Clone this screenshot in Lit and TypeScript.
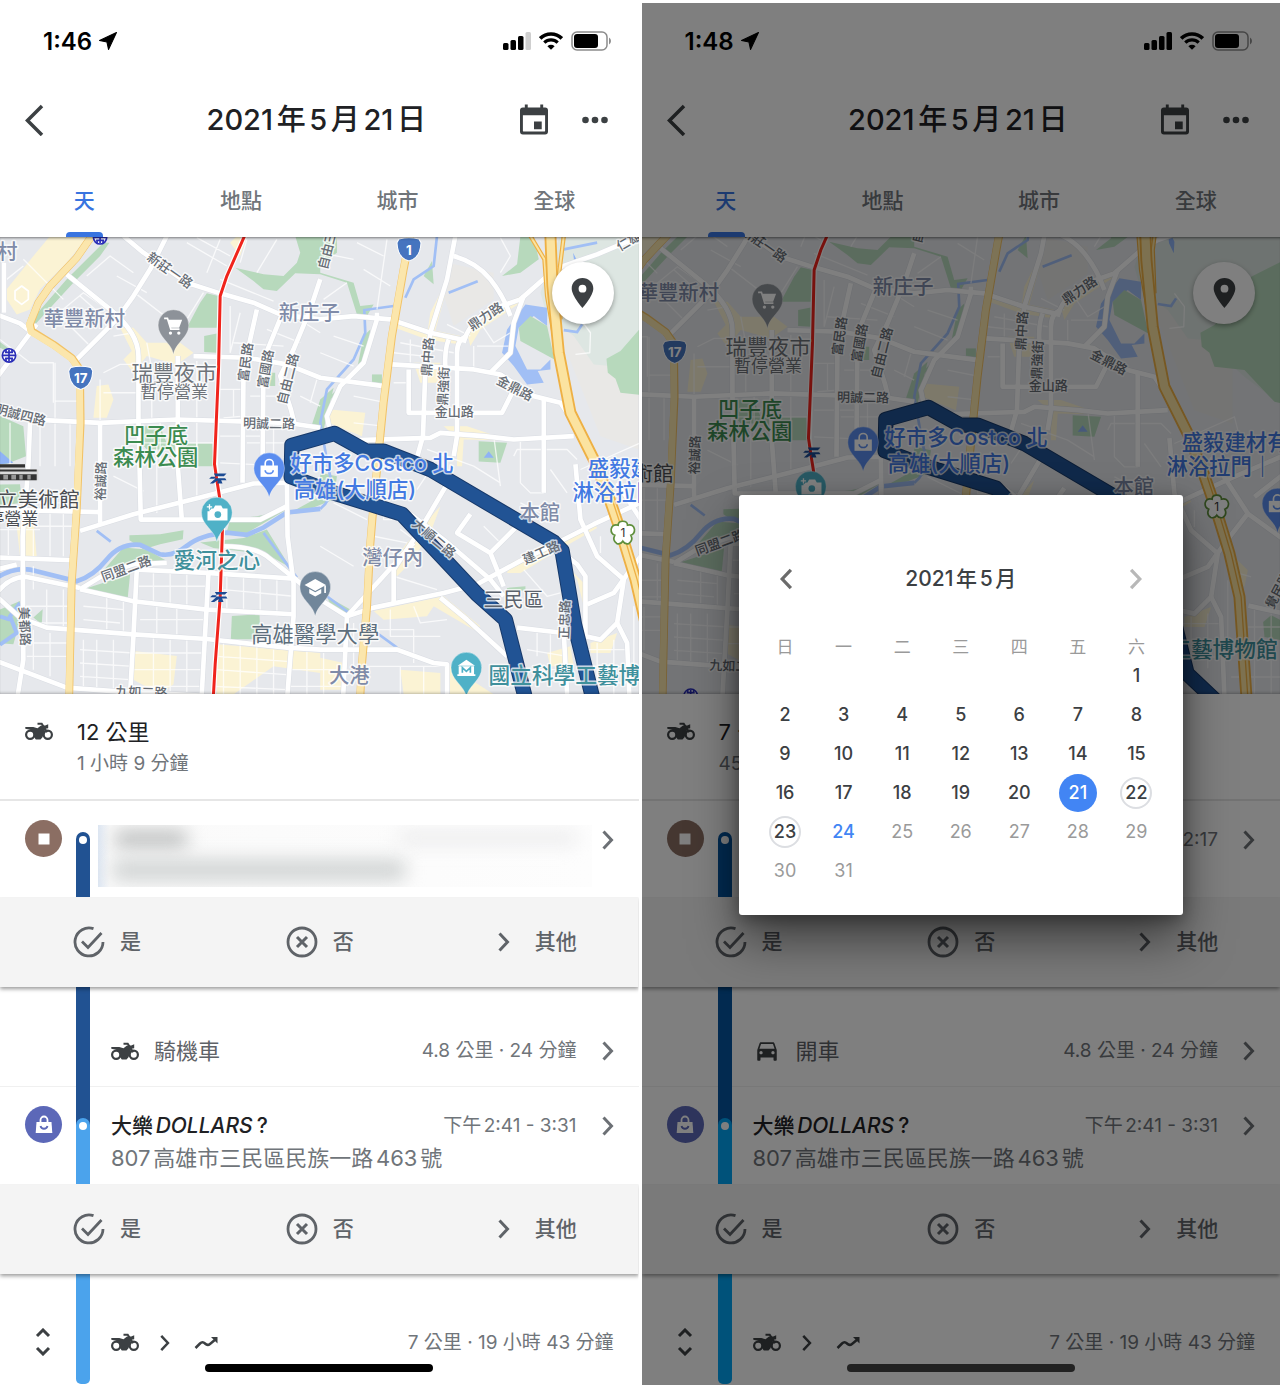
import { LitElement, html, svg, css, nothing } from "lit";
import { customElement, property, state } from "lit/decorators.js";
import { classMap } from "lit/directives/class-map.js";

/* ---------- icons ---------- */

const shared = css`
  * {
    box-sizing: border-box;
  }
  svg {
    display: block;
    flex: none;
  }
  button {
    margin: 0;
    padding: 0;
    border: 0;
    background: none;
    font: inherit;
    color: inherit;
    cursor: pointer;
  }
`;

const chevron = (size = 24, width = 3) => html`
  <svg width=${size} height=${size} viewBox="0 0 24 24" fill="none" stroke="currentColor" stroke-width=${width} aria-hidden="true">
    <path d="M7.500 3.500L15.500 12 7.500 20.500" />
  </svg>
`;

const chevronLeft = (size = 24, width = 3) => html`
  <svg width=${size} height=${size} viewBox="0 0 24 24" fill="none" stroke="currentColor" stroke-width=${width} aria-hidden="true">
    <path d="M16.500 3.500L8.500 12 16.500 20.500" />
  </svg>
`;

const motorcycle = html`
  <svg width="28" height="19" viewBox="0 0 28 19" aria-hidden="true">
    <g fill="none" stroke="currentColor" stroke-width="2.200">
      <circle cx="5.200" cy="12.800" r="4.100" />
      <circle cx="22.800" cy="12.800" r="4.100" />
      <path d="M12.500 1.800h4.200l5.500 8.500" stroke-width="2" />
    </g>
    <path fill="currentColor" d="M.3 5h8l4.200 1.200 3.500-2.800h4.200l3-1.200v4l-2.700.6-3 8.500-2 2.200h-4.700l-1.800-2.400c.8-3.200-.8-6.500-4-7.300L.3 6.800z" />
  </svg>
`;

const car = html`
  <svg width="28" height="26" viewBox="0 0 24 24" aria-hidden="true">
    <path fill="currentColor" d="M18.920 5.010C18.720 4.420 18.160 4 17.500 4h-11c-.66 0-1.210.42-1.420 1.010L3 11v9c0 .55.45 1 1 1h1c.55 0 1-.45 1-1v-2h12v2c0 .55.45 1 1 1h1c.55 0 1-.45 1-1v-9l-2.080-5.990zM6.500 15c-.83 0-1.500-.67-1.500-1.500S5.670 12 6.500 12s1.500.67 1.500 1.500S7.330 15 6.500 15zm11 0c-.83 0-1.500-.67-1.500-1.500s.67-1.500 1.500-1.500 1.500.67 1.500 1.500-.67 1.500-1.500 1.500zM5 10l1.500-4.500h11L19 10H5z" />
  </svg>
`;

const checkCircle = html`
  <svg width="32" height="32" viewBox="0 0 32 32" fill="none" stroke="currentColor" stroke-width="2.800" aria-hidden="true">
    <path d="M20.500 2.700A14 14 0 1 0 30 16" />
    <path d="M9 15.500l6 6L28.500 7" />
  </svg>
`;

const crossCircle = html`
  <svg width="32" height="32" viewBox="0 0 32 32" fill="none" stroke="currentColor" stroke-width="2.800" aria-hidden="true">
    <circle cx="16" cy="16" r="14" />
    <path d="M11 11l10 10M21 11L11 21" stroke-width="3" />
  </svg>
`;

const bag = html`
  <svg width="20" height="20" viewBox="0 0 20 20" fill="none" aria-hidden="true">
    <path d="M2.500 7h15l.8 11H1.700z" fill="#fff" />
    <path d="M6.500 7.500V5a3.500 3.500 0 0 1 7 0v2.500" stroke="#fff" stroke-width="1.800" />
    <path d="M6.500 11a3.600 3.600 0 0 0 7 0" stroke="#5c68b8" stroke-width="1.800" />
  </svg>
`;

const stop = html`
  <svg width="12" height="12" viewBox="0 0 12 12" aria-hidden="true"><path fill="#fff" d="M.5.5h11v11H.5z" /></svg>
`;

/* ---------- map ---------- */

interface MapLabel {
  text: string;
  x: number;
  y: number;
  kind: string;
  turn?: number;
}

const avenues: string[] = [
  "M370 0L430 50 560 140 660 172 760 200 840 235 960 250 1060 240 1170 250 1290 290 1390 312",
  "M500 0L450 100 400 180 350 250 230 370",
  "M200 115L330 220Q415 290 415 360V550L422 850H780L860 810",
  "M130 552L300 560 530 550 860 560 960 575",
  "M-10 425L110 265",
  "M-10 235L60 262 90 285",
  "M12 80V230",
  "M90 560L85 690 68 900 70 1270 40 1460",
  "M770 220L730 400 727 740",
  "M860 200L790 370 787 700",
  "M960 130L930 220 880 340 840 420 872 520 882 560",
  "M240 884L400 834 600 784 760 742 860 740",
  "M240 1059L400 1095 620 1120 880 1134",
  "M240 1059L320 1010 400 984 500 980",
  "M-10 964L220 972",
  "M410 1000L620 1010 880 1027",
  "M410 1000L400 1200 385 1460",
  "M625 1010L600 1460",
  "M-10 1080L60 1144 140 1174 400 1194 620 1208 860 1234 960 1240 1190 1240 1300 1280 1340 1284V1460",
  "M860 744L862 900 880 1040 880 1140 855 1460",
  "M665 930Q760 930 800 960L880 1024 960 1090 1040 1140 1025 1460",
  "M-10 1274L200 1354 350 1365 600 1378",
  "M-10 1070Q30 1020 80 1022L240 1055",
  "M-10 1000L50 985",
  "M580 360L740 365 860 385 960 425 1150 450",
  "M1365 0L1340 130 1290 290 1275 400 1268 600 1250 664",
  "M1360 60Q1430 80 1470 130T1530 240",
  "M1390 320Q1400 270 1460 225L1560 190 1640 120 1690 90 1790 55 1920 0",
  "M1570 180L1540 260 1530 350 1470 410",
  "M1400 300Q1370 310 1370 350V600L1360 660",
  "M1345 310Q1332 340 1335 400",
  "M1175 385L1420 400 1500 415 1600 480 1680 500 1720 560 1750 630",
  "M1225 400V530H1505L1540 460",
  "M1070 612L1290 605 1320 590 1450 600 1540 610 1720 600",
  "M1630 490L1630 770",
  "M1340 744L1260 880 1180 1000 1180 1100",
  "M1410 834L1370 890 1470 950 1510 1050",
  "M1470 950L1550 870",
  "M2070 735L1910 804 1780 864 1650 930 1560 974 1430 1044 1330 1070 1120 1114 1040 1140",
  "M1230 834L1330 910 1470 1030 1510 1080",
  "M1240 920L1040 1140",
  "M1320 1084L1400 1150 1520 1260",
  "M1550 1174L1690 1190 1700 1374",
  "M1660 930L1730 984 1755 1020V1200L1800 1210 1850 1160 1880 1220 1890 1460",
  "M1725 684L1740 850 1790 960 1870 1030 1850 1160",
  "M1760 1104L1840 1070 1890 1000 1960 910 2070 990",
  "M1850 740L1960 910",
  "M1962 1186L2070 1210M1980 860L2070 790",
  "M1130 230V250L1090 380 1020 450 980 540 990 590",
  "M533 360V690L545 850",
  "M300 560V860",
  "M0 820L60 822 300 828",
];

const lanes: string[] = [
  "M70 70L190 190M20 130L70 90M260 120L330 60 400 110M140 260L250 170 350 240M180 240L270 330M240 180L330 260",
  "M410 175L520 260M610 170L560 250M350 120L440 170M560 20L680 90M590 5L690 60M620 110L660 10M740 10L720 80M830 10L770 110",
  "M660 130L820 195M690 210L690 350M720 230L690 350M700 320L850 330M90 380H160V500M165 380V690M90 380L0 310",
  "M165 495H240M210 560V690M120 560V690M30 560V690M310 470H420M310 410L360 385H440M420 460H530M300 560V430",
  "M340 300L400 290M440 320L455 400V550M480 550V690M590 375V690M660 460H730L730 540 670 545M700 460V540",
  "M750 480H860M800 280L900 320M880 240L960 290M900 480L960 510M950 430L930 500M740 620H860M430 620H640M660 600H780",
  "M660 680L860 690M590 620V780M470 620V830M340 720L430 765M820 560V740M100 800H220M100 870H220M150 800V960M190 800V960",
  "M25 830V960M100 880V960M0 880H120M100 990V1060M140 1060V1170M190 1060V1170M70 1110H220M70 1160H220",
  "M460 1000V1110M510 1000V1110M560 1010V1110M410 1050H620M680 1020V1130M730 1020V1130M780 1030V1130M830 1030V1140M670 1060L880 1080",
  "M470 1110V1190M530 1115V1200M420 1150H620M250 1110L370 1120M250 1150L360 1160M320 1080V1180M370 1090V1190",
  "M250 1210V1360M290 1210V1360M340 1210V1360M240 1240L400 1250M240 1280L400 1290M240 1320L390 1330",
  "M100 1180V1300M150 1190V1320M80 1220H200M80 1260H210M460 1200V1374M510 1210V1374M560 1210V1374M400 1250H610M400 1300H610M390 1350H600",
  "M670 1220V1460M720 1220V1460M770 1230V1460M820 1240V1460M650 1260L860 1275M650 1300L860 1315M640 1350L860 1360M920 1240V1460M970 1250V1460M870 1300H1030M870 1350H1030",
  "M960 50L1060 70M1000 5L960 90M1070 20L1150 60M1090 100L1170 150M1160 10L1130 220M1040 140L970 190",
  "M1000 300L1090 330M960 350L1060 390M1180 350L1270 360M1230 310V380M1270 330V450M1180 440H1225V530M1200 320L1360 350",
  "M1440 260L1480 320 1530 290M1430 330H1530M1420 330V400M1310 230L1280 300M1340 265L1410 300M1060 480L1160 500M1060 560L1150 570",
  "M1540 660L1550 640 1700 640 1730 670M1480 600L1500 750M1280 640L1420 690 1500 740M1560 610V740L1590 770H1630M1650 700L1700 770",
  "M1000 800L1100 850M1150 760V850H1180M1120 900L1220 920M1160 940L1260 980M1200 880L1310 960M1180 1020L1310 1060M960 930L1060 990",
  "M1590 860L1640 900M1450 870L1500 920M1560 800L1640 840M1570 1000L1640 1080 1680 1070M1610 1190V1260M1650 1190V1300",
  "M1120 1180H1240V1280M1170 1120V1200H1320M1240 1110L1260 1160 1340 1150M1060 1160V1300M1100 1290H1330M1200 1290V1460M1270 1290V1460",
  "M1580 1240L1700 1260M1600 1300H1700M1760 1240H1880M1790 1220V1374M1840 1210V1374M1770 1290H1890M1770 1340H1890",
  "M1800 900V950M1900 1080L1970 1100M1900 1110V1300M1960 1250H2060M1980 1190V1450M2030 1200V1450M1910 1400H2060",
  "M1740 250L1770 290 1768 350 1725 355M1740 700L1920 620 1930 660M1290 700L1250 760M1500 5L1530 60 1500 110",
];

const shops: string[] = [
  "M20 160L100 60 150 0H265L200 80 120 160 90 220 50 235 20 190z",
  "M360 275H400L440 320 540 320 580 350 530 385 440 360 400 410 370 370 395 345z",
  "M290 450L325 445 340 490 320 545 280 545z",
  "M400 1244L530 1259 520 1344 480 1374 400 1330z",
  "M650 1224L960 1250V1310L820 1290 700 1374H650z",
  "M990 520L1095 530 1085 600 985 560z",
  "M50 870L100 850 110 960 60 960z",
  "M690 20L710 0H740L720 60z",
  "M1170 250L1290 280 1380 300V325L1280 310 1170 270z",
  "M1290 230L1320 170 1335 175 1300 300H1280z",
  "M1240 380H1320V440H1260z",
  "M1330 570H1400L1490 600V612L1390 610 1385 690H1370V605z",
  "M1400 290L1500 210 1560 180V200L1440 280 1410 330z",
  "M1220 920L1320 810 1290 890 1230 980 1190 1020 1160 1000z",
  "M1120 1124L1330 1080 1440 1170 1420 1180 1300 1110 1280 1140 1150 1150z",
  "M1530 980L1650 920 1780 860 1790 875 1660 950 1560 1010 1520 1010z",
  "M1340 1284L1480 1374H1340zM1200 1300L1320 1310V1374H1210z",
  "M1700 990L1750 1040V1110L1730 1030zM1770 1220L1850 1190 1830 1250H1770z",
  "M1640 1250L1710 1230 1720 1290 1650 1290z",
  "M960 1264L1030 1280V1360H960z",
  "M1900 1020L1960 1080 1950 1130 1910 1080z",
];

const parks: string[] = [
  "M885 0H1010L1010 50 960 85 960 110 1060 140 1080 210 1120 205 1100 240 1070 235 1040 140 960 115 885 112 830 165 790 160 760 135 705 95 790 115 850 120 890 80 900 50z",
  "M560 275H650L655 180 620 172 600 200z",
  "M612 300L650 292V350L612 348z",
  "M-10 535L70 570 78 660 -10 695z",
  "M-10 310L30 340V350L-10 330z",
  "M310 20H328L300 60 220 140 105 265 100 245 200 130z",
  "M935 565L960 490 1000 455 970 580z",
  "M380 570H480L500 622H636L638 690H560L520 640 440 640z",
  "M388 897L480 894 550 882 548 909 480 924 430 939 388 912z",
  "M300 1014L370 934 440 940 500 974 430 984 330 1000z",
  "M250 1059L390 1014 383 1084 340 1079z",
  "M690 850L770 840 860 820 740 890 680 886z",
  "M600 919L730 905 800 880 870 994 800 954 640 935z",
  "M695 1139L778 1134 780 1209 692 1209z",
  "M-10 1124L60 1094 58 1160 40 1224 -10 1220z",
  "M100 1144L128 1119 125 1164z",
  "M-10 745L60 744 66 800 -10 810z",
  "M1505 120L1550 85 1560 0H1600L1615 70 1560 110z",
  "M1295 75L1300 145 1270 120z",
  "M1070 400L1090 300 1110 280 1100 360 1040 430 1000 500 990 480z",
  "M1115 415H1145V445H1115z",
  "M1435 615L1520 620 1500 680 1435 676z",
  "M960 710L1010 720 1000 790 900 830 860 835 960 780z",
  "M1520 1055L1575 1050V1062L1520 1070z",
  "M980 1080L1050 1120 1040 1130 990 1105z",
  "M2006 1235L2030 1215 2060 1230V1290L2010 1280z",
  "M812 410H825V450H805z",
];

const mapLabels: MapLabel[] = [
  { text: "村", x: 22, y: 46, kind: "hood" },
  { text: "華豐新村", x: 253, y: 246, kind: "hood" },
  { text: "新庄子", x: 927, y: 230, kind: "hood" },
  { text: "大港", x: 1047, y: 1318, kind: "hood" },
  { text: "灣仔內", x: 1177, y: 964, kind: "hood" },
  { text: "本館", x: 1618, y: 828, kind: "hood" },
  { text: "三民區", x: 1539, y: 1092, kind: "district" },
  { text: "瑞豐夜市", x: 522, y: 411, kind: "poi" },
  { text: "暫停營業", x: 522, y: 468, kind: "status" },
  { text: "凹子底", x: 468, y: 598, kind: "park" },
  { text: "森林公園", x: 467, y: 662, kind: "park" },
  { text: "立美術館", x: 115, y: 790, kind: "museum" },
  { text: "停營業", x: 38, y: 847, kind: "status dark" },
  { text: "愛河之心", x: 650, y: 972, kind: "sight" },
  { text: "高雄醫學大學", x: 945, y: 1194, kind: "school" },
  { text: "國立科學工藝博物館", x: 1757, y: 1317, kind: "sight" },
  { text: "好市多Costco 北", x: 1116, y: 681, kind: "shop" },
  { text: "高雄(大順店)", x: 1064, y: 759, kind: "shop" },
  { text: "盛毅建材有", x: 1922, y: 697, kind: "shop" },
  { text: "淋浴拉門｜", x: 1876, y: 768, kind: "shop" },
  { text: "新莊一路", x: 510, y: 102, kind: "street", turn: 35 },
  { text: "明誠四路", x: 62, y: 535, kind: "street", turn: 14 },
  { text: "明誠二路", x: 807, y: 561, kind: "street", turn: 1 },
  { text: "富民路", x: 735, y: 378, kind: "street", turn: -82 },
  { text: "富國路", x: 795, y: 398, kind: "street", turn: -80 },
  { text: "自由二路", x: 862, y: 428, kind: "street", turn: -76 },
  { text: "自由三", x: 980, y: 42, kind: "street", turn: -76 },
  { text: "鼎中路", x: 1281, y: 362, kind: "street", turn: -86 },
  { text: "鼎強街", x: 1328, y: 450, kind: "street", turn: -87 },
  { text: "金山路", x: 1362, y: 525, kind: "street" },
  { text: "鼎力路", x: 1455, y: 240, kind: "street", turn: -34 },
  { text: "金鼎路", x: 1544, y: 455, kind: "street", turn: 27 },
  { text: "仁雄", x: 1884, y: 14, kind: "street", turn: -30 },
  { text: "裕誠路", x: 301, y: 734, kind: "street", turn: -88 },
  { text: "同盟二路", x: 378, y: 996, kind: "street", turn: -20 },
  { text: "美都路", x: 75, y: 1170, kind: "street", turn: 87 },
  { text: "九如二路", x: 424, y: 1366, kind: "street", turn: 2 },
  { text: "大順二路", x: 1302, y: 906, kind: "street", turn: 40 },
  { text: "建工路", x: 1622, y: 948, kind: "street", turn: -24 },
  { text: "正忠路", x: 1691, y: 1150, kind: "street", turn: -88 },
  { text: "覺民路", x: 2050, y: 1140, kind: "street", turn: -62 },
];

const pinShape = "M0 88C-6 52-46 38-46 0A46 46 0 1 1 46 0C46 38 6 52 0 88z";

const route =
  "M1590 1460L1572 1374 1515 1150 1430 1074 1205 834 1000 770 873 722 875 628 1003 592 1098 645 1150 645 1290 700 1660 918 1685 944 1722 1164 1778 1390 1863 1470";

const pin = (x: number, y: number, fill: string, glyph: unknown) => svg`
  <g transform="translate(${x} ${y})">
    <path d=${pinShape} fill=${fill} stroke="#fff" stroke-opacity=".5" stroke-width="2" />
    ${glyph}
  </g>`;

const bagGlyph = svg`
  <path d="M-26-8h52v34h-52z" fill="#fff" />
  <path d="M-12-6v-8a12 12 0 0 1 24 0v8" fill="none" stroke="#fff" stroke-width="5" />
  <path d="M-12 6a12 10 0 0 0 24 0" fill="none" stroke="#5b8def" stroke-width="5" />`;

const hsr = (x: number, y: number) => svg`
  <path transform="translate(${x} ${y})" fill="#1b4a93" d="M-14-15h38l-8 8h-22l-6 6h32l4 6H8l4 10H-4l2-9-14 9h-10l16-14h-18l6-6h14z" />`;

const metro = (x: number, y: number) => svg`
  <g transform="translate(${x} ${y})" fill="none" stroke="#2b2fb8" stroke-width="5">
    <circle r="20" fill="#fff" />
    <path d="M-12-9H12M-20 0H20M-12 9H12M0-18V18M-9-18V-9M9-18V-9M-9 9V18M9 9V18" />
  </g>`;

const shield = (x: number, y: number, label: string) => svg`
  <g transform="translate(${x} ${y})">
    <path d="M-30-31Q0-38 30-31L36-20Q34 18 12 30L0 35-12 30Q-34 18-36-20z" fill="#4574bf" stroke="#fff" stroke-width="3" />
    <text class="shield" y="1">${label}</text>
  </g>`;

@customElement("city-map")
class CityMap extends LitElement {
  @property({ type: Number }) panX = 0;
  @property({ type: Number }) panY = 3;

  static styles = css`
    :host {
      display: block;
      text-autospace: no-autospace;
    }
    .canvas {
      display: block;
      width: 100%;
      aspect-ratio: 638 / 457;
      background: #e6e8ec;
    }
    .lane,
    .avenue,
    .line {
      fill: none;
      stroke: #fff;
      stroke-linejoin: round;
    }
    .lane {
      stroke-width: 4;
      stroke-opacity: 0.75;
    }
    .avenue {
      stroke-width: 14;
    }
    .casing {
      fill: none;
      stroke: #dadde3;
      stroke-width: 17;
      stroke-linejoin: round;
    }
    text {
      font-family: Inter, "Noto Sans CJK TC", sans-serif;
      text-anchor: middle;
      dominant-baseline: central;
      paint-order: stroke;
      stroke: #fff;
      stroke-opacity: 0.75;
      stroke-width: 9;
      stroke-linejoin: round;
    }
    .hood {
      font-size: 61px;
      font-weight: 500;
      fill: #7f8ba8;
    }
    .district {
      font-size: 60px;
      fill: #5b626c;
    }
    .poi {
      font-size: 64px;
      fill: #6e7379;
    }
    .status {
      font-size: 51px;
      fill: #6e7379;
    }
    .status.dark,
    .museum {
      fill: #4a4d52;
    }
    .museum {
      font-size: 62px;
    }
    .park {
      font-size: 64px;
      font-weight: 500;
      fill: #3c8b50;
    }
    .sight {
      font-size: 65px;
      font-weight: 500;
      fill: #3f909c;
    }
    .school {
      font-size: 64px;
      fill: #5d6e7c;
    }
    .shop {
      font-size: 64px;
      font-weight: 500;
      fill: #4379e2;
    }
    .street {
      font-size: 39px;
      font-weight: 500;
      fill: #666c74;
    }
    .shield {
      font-size: 40px;
      font-weight: 700;
      fill: #fff;
      stroke: none;
    }
    .flower {
      font-size: 36px;
      fill: #333;
      stroke: none;
    }
  `;

  render() {
    return html`
      <svg class="canvas" viewBox="${this.panX} ${this.panY} 1914 1371" preserveAspectRatio="xMidYMid slice" role="img" aria-label="地圖">
        <path d="M1340 80L1480 110 1480 190 1360 270 1330 180zM1560 300L1700 350 1800 600 1914 640V400L1700 200z" fill="#e9e8e6" />
        <path d="M1678 0H2110V620L1950 500 1830 390 1780 385 1720 300 1640 240 1620 170z" fill="#dde6e2" />
        <path d="M1818 368L1860 345 1960 230 1970 200 2110 130V590L2040 575 1950 480 1860 470 1845 428 1822 410z" fill="#b7d9bc" />
        <g fill="#fbf3d4">${shops.map((d) => svg`<path d=${d} />`)}</g>
        <g fill="#b7d9bc">${parks.map((d) => svg`<path d=${d} />`)}</g>
        <path
          d="M1505 350L1520 280 1575 205 1640 215V270L1600 240 1555 275 1545 330 1580 400 1620 400 1650 370V400L1612 405 1630 440 1580 445 1540 390z"
          fill="#a1bff5"
        />
        <path d="M1555 275L1590 240 1640 270 1662 370 1560 315z" fill="#b7d9bc" />
        <path d="M1450 665L1465 645 1480 665zM1718 50L1740 95 1738 130 1724 100zM0 645L40 680 0 684z" fill="#8fb3f5" />
        <g fill="none" stroke="#a1bff5">
          <path d="M-10 1025Q50 985 110 1005L230 1035Q280 1020 320 970T420 926L480 954Q520 962 560 929T680 889L740 896 790 874 860 829 960 818" stroke-width="14" />
          <path d="M960 818Q1010 780 985 700L960 560 980 460 1060 370 1095 290 1092 222 1180 210M1215 185L1240 130 1300 90 1310 0M1345 170L1432 136M1690 40L1790 20M1690 282L1730 288 1745 265M290 884L332 916M790 890L890 1024M980 1080L1060 1140M1130 1190L1190 1234" stroke-width="8" />
          <path d="M60 1100L30 1140 50 1190 0 1225M0 1140L30 1150" stroke-width="12" />
        </g>
        ${lanes.map((d) => svg`<path class="lane" d=${d} />`)}
        ${avenues.map((d) => svg`<path class="casing" d=${d} />`)}
        ${avenues.map((d) => svg`<path class="avenue" d=${d} />`)}
        <path class="line" d="M65 150L85 165V190L65 205 45 190V165z" stroke-width="5" />

        <g fill="none" stroke-linejoin="round">
          <path d="M275 0L230 65 150 150 115 200 90 265 95 285 160 325 215 365 240 400 242 560 230 824 215 1044 206 1460" stroke="#f2c265" stroke-width="23" />
          <path d="M275 0L230 65 150 150 115 200 88 265 93 287 160 328 215 368 238 402 240 560 229 824 214 1044 205 1460" stroke="#fbe6ac" stroke-width="20" />
          <path d="M1230 0L1210 100 1175 300 1150 500 1138 620 1120 804 1110 924 1100 1114 1085 1284 1076 1460" stroke="#f2c265" stroke-width="24" />
          <path d="M1229 0L1209 100 1174 300 1149 500 1137 620 1119 804 1109 924 1099 1114 1084 1284 1075 1460" stroke="#fbe6ac" stroke-width="20" />
          <path d="M1590 0L1632 70 1640 180 1668 340M1690 0L1675 120 1680 250" stroke="#eeb044" stroke-width="13" />
          <path d="M1590 0L1632 70 1640 180 1668 340M1690 0L1675 120 1680 250" stroke="#fbe3a0" stroke-width="6" />
          <path d="M1650 0L1656 150 1675 350 1710 530 1780 670 1822 774 1862 890 1905 1030 1935 1160 1956 1460" stroke="#eeb044" stroke-width="36" />
          <path d="M1650 0L1656 150 1675 350 1710 530 1780 670 1822 774 1862 890 1905 1030 1935 1160 1956 1460" stroke="#fbe3a0" stroke-width="25" />
          <path d="M1830 774L1868 890 1910 1030 1940 1160 1960 1460" stroke="#eeb044" stroke-width="4" />
          <path d="M733 0L680 120 660 180 655 400 645 684 652 744 668 844 660 1084 645 1284 635 1460" stroke="#fff" stroke-width="16" />
          <path d="M733 0L680 120 660 180 655 400 643 684 652 744 668 844 660 1084 645 1284 635 1460" stroke="#f0241c" stroke-width="9" />
        </g>

        <g fill="none" stroke-linejoin="round">
          <path d=${route} stroke="#17396a" stroke-width="46" />
          <path d=${route} stroke="#215394" stroke-width="40" />
        </g>

        <path d="M0 684H75V700H115V732H0z" fill="#d9d9d9" />
        <path d="M0 684H75V694H0zM0 700H110V706H0zM0 714H110V732H0z" fill="#333" />
        <path d="M10 716h14v14h-14zM34 716h14v14h-14zM58 716h10v14h-10zM82 716h10v14h-10z" fill="#999" />

        ${metro(27, 358)} ${metro(300, 4)} ${metro(290, 1456)} ${shield(242, 425, "17")} ${shield(1226, 40, "1")}
        <g transform="translate(1867 889)">
          <path
            d="M0-34Q14-34 14-22Q32-26 35-10Q36 4 24 8Q32 24 18 33Q6 36 0 26Q-6 36-18 33Q-32 24-24 8Q-36 4-35-10Q-32-26-14-22Q-14-34 0-34z"
            fill="#fff"
            stroke="#5f8f3c"
            stroke-width="5"
          />
          <text class="flower">1</text>
        </g>
        ${hsr(655, 727)} ${hsr(658, 1082)}

        ${mapLabels.map(
          (l) => svg`<text class=${l.kind} x=${l.x} y=${l.y} transform=${l.turn ? `rotate(${l.turn} ${l.x} ${l.y})` : nothing}>${l.text}</text>`,
        )}

        ${pin(
          520,
          267,
          "#8d9299",
          svg`<path d="M-28-20h10l10 32h26" fill="none" stroke="#fff" stroke-width="5" /><path d="M-16-16h42l-9 24h-26z" fill="#fff" /><circle cx="-9" cy="24" r="5" fill="#fff" /><circle cx="16" cy="24" r="5" fill="#fff" />`,
        )}
        ${pin(807, 696, "#5b8def", bagGlyph)} ${pin(2049, 880, "#5b8def", bagGlyph)}
        ${pin(
          650,
          829,
          "#4fb1c7",
          svg`<path d="M-22-12h12l5-9h18l5 9h14v36h-60v-28h6z" fill="#fff" /><circle cx="3" cy="6" r="10" fill="#4fb1c7" /><path d="M-22-26v18M-31-17h18" stroke="#4fb1c7" stroke-width="9" /><path d="M-22-25v16M-30-17h16" stroke="#fff" stroke-width="4" />`,
        )}
        ${pin(
          945,
          1052,
          "#71869a",
          svg`<path d="M-32-6L0-24 32-6 0 12z" fill="#fff" /><path d="M-18 6v13L0 29 18 19V6L0 16zM27-4h5v22h-5z" fill="#fff" />`,
        )}
        ${pin(
          1398,
          1294,
          "#4fb1c7",
          svg`<path d="M-26-6L0-24 26-6zM-23-4h46v24h-46zM-27 20h54v5h-54z" fill="#fff" /><path d="M-12 15V0L0 11 12 0v15" fill="none" stroke="#4fb1c7" stroke-width="5" />`,
        )}
      </svg>
    `;
  }
}

/* ---------- calendar dialog ---------- */

@customElement("date-dialog")
class DateDialog extends LitElement {
  @state() private selected = 21;

  static styles = [
    shared,
    css`
      :host {
        display: block;
        width: 444px;
        max-width: 90%;
        padding: 64px 17px 24px;
        border-radius: 3px;
        background: #fff;
        color: #3c4043;
        box-shadow: 0 24px 48px rgba(0, 0, 0, 0.5), 0 4px 16px rgba(0, 0, 0, 0.3);
      }
      .nav {
        display: flex;
        align-items: center;
        justify-content: space-between;
        height: 40px;
        padding: 0 17px;
      }
      .title {
        margin: 0;
        font-size: 21px;
        line-height: 28px;
        font-weight: 500;
      }
      .step {
        color: #6b6b6b;
      }
      .step:disabled {
        color: #b8b8b8;
      }
      .days {
        width: 100%;
        margin-top: 38px;
        border-collapse: collapse;
        table-layout: fixed;
        text-align: center;
      }
      th {
        height: 20px;
        padding: 0;
        font-size: 17px;
        line-height: 20px;
        font-weight: 400;
        color: #9a9a9a;
      }
      td {
        height: 39px;
        padding: 0;
      }
      .day {
        display: grid;
        place-items: center;
        width: 32px;
        height: 32px;
        margin: 0 auto;
        border-radius: 50%;
        font-size: 18px;
        line-height: 20px;
        font-weight: 500;
      }
      .day:disabled {
        color: #9a9a9a;
        font-weight: 400;
      }
      .day.ring {
        border: 2px solid #dcdee2;
      }
      .day.today {
        color: #4285f4;
      }
      .day.chosen {
        width: 38px;
        height: 38px;
        background: #4285f4;
        color: #fff;
      }
    `,
  ];

  private cell(day: number) {
    if (day < 1 || day > 31) return html`<td></td>`;
    const classes = {
      day: true,
      ring: day === 22 || day === 23,
      today: day === 24,
      chosen: day === this.selected,
    };
    return html`<td>
      <button class=${classMap(classes)} ?disabled=${day > 24} @click=${() => (this.selected = day)}>${day}</button>
    </td>`;
  }

  render() {
    const weekdays = ["日", "一", "二", "三", "四", "五", "六"];
    return html`
      <div class="nav">
        <button class="step" aria-label="上個月">${chevronLeft(26)}</button>
        <h2 class="title">2021年5月</h2>
        <button class="step" aria-label="下個月" disabled>${chevron(26)}</button>
      </div>
      <table class="days">
        <thead>
          <tr>
            ${weekdays.map((d) => html`<th scope="col">${d}</th>`)}
          </tr>
        </thead>
        <tbody>
          ${[0, 1, 2, 3, 4, 5].map((week) => html`<tr>${weekdays.map((_, i) => this.cell(week * 7 + i - 5))}</tr>`)}
        </tbody>
      </table>
    `;
  }
}

/* ---------- phone ---------- */

@customElement("timeline-phone")
class TimelinePhone extends LitElement {
  @property() time = "1:46";
  @property() distance = "";
  @property() duration = "";
  @property() mode = "motorcycle";
  @property() stopTime = "";
  @property({ type: Number }) panX = 0;
  @property({ type: Number }) panY = 3;
  @property({ type: Boolean }) fullSignal = false;
  @property({ type: Boolean, reflect: true }) dimmed = false;

  static styles = [
    shared,
    css`
      :host {
        display: block;
        position: relative;
        min-width: 0;
        overflow: hidden;
        background: #fff;
        color: #202124;
        --dark: #215292;
        --light: #4ba3ec;
      }
      :host([dimmed]) {
        --dark: #0454a0;
        --light: #00a4f4;
      }
      .status {
        display: flex;
        align-items: center;
        height: 76px;
        padding: 0 28px 0 43px;
        gap: 7px;
        color: #000;
      }
      .clock {
        font-size: 24px;
        font-weight: 600;
      }
      .radios {
        display: flex;
        align-items: center;
        gap: 8px;
        margin-left: auto;
      }
      .header {
        display: grid;
        grid-template-columns: 1fr auto 1fr;
        align-items: center;
        height: 82px;
        padding: 0 31px 0 25px;
        color: #3c4043;
      }
      .heading {
        margin: 0;
        font-size: 29px;
        font-weight: 500;
        line-height: 40px;
        color: #202124;
        white-space: nowrap;
      }
      .tools {
        display: flex;
        align-items: center;
        justify-content: flex-end;
        gap: 34px;
      }
      .back {
        justify-self: start;
      }
      .tabs {
        display: grid;
        grid-template-columns: repeat(4, 1fr);
        height: 76px;
        padding: 0 6px;
      }
      .tab {
        position: relative;
        font-size: 21px;
        font-weight: 500;
        color: #70757a;
      }
      .tab.active {
        color: #3874e0;
      }
      .tab.active::after {
        content: "";
        position: absolute;
        left: 50%;
        bottom: 0;
        width: 37px;
        height: 5px;
        margin-left: -18px;
        border-radius: 4px 4px 0 0;
        background: #3874e0;
      }
      .map {
        position: relative;
      }
      .map::after {
        content: "";
        position: absolute;
        inset: 0;
        box-shadow: inset 0 3px 3px -2px rgba(0, 0, 0, 0.5), inset 0 -3px 3px -2px rgba(0, 0, 0, 0.25);
        pointer-events: none;
      }
      .locate {
        position: absolute;
        top: 25px;
        right: 25px;
        display: grid;
        place-items: center;
        width: 62px;
        height: 62px;
        border-radius: 50%;
        background: #fff;
        color: #3c4043;
        box-shadow: 0 2px 5px rgba(0, 0, 0, 0.35);
      }
      .summary {
        display: flex;
        align-items: flex-start;
        gap: 24px;
        height: 107px;
        padding: 24px 25px 0;
        border-bottom: 2px solid #e6e6e6;
      }
      .summary svg {
        margin-top: 4px;
        color: #3c4043;
      }
      .total {
        font-size: 22px;
        line-height: 28px;
      }
      .sub {
        margin-top: 4px;
        font-size: 19px;
        line-height: 28px;
        color: #70757a;
      }
      .row {
        display: grid;
        grid-template-columns: 76px 14px 1fr;
      }
      .place {
        min-height: 97px;
      }
      .place.first {
        min-height: 96px;
      }
      .travel {
        min-height: 100px;
        box-shadow: inset 0 -1px 0 #f0f0f0;
      }
      .end {
        min-height: 111px;
      }
      .badge {
        display: grid;
        place-items: center;
        width: 37px;
        height: 37px;
        margin: 19px 0 0 25px;
        border-radius: 50%;
        background: #5c68b8;
      }
      .badge.brown {
        background: #8b6e63;
      }
      .rail {
        background: var(--dark);
      }
      .rail.light {
        background: var(--light);
      }
      .rail.start {
        margin-top: 31px;
        border-radius: 7px 7px 0 0;
      }
      .rail.joint {
        padding-top: 31px;
      }
      .rail.finish {
        margin-bottom: 1px;
        border-radius: 0 0 5px 5px;
      }
      .leg {
        height: 100%;
        border-radius: 7px 7px 0 0;
        background: var(--light);
      }
      .dot {
        display: block;
        width: 8px;
        height: 8px;
        margin: 0 auto;
        border-radius: 50%;
        background: #fff;
      }
      .rail.start,
      .leg {
        padding-top: 4px;
      }
      .body {
        display: flex;
        align-items: center;
        gap: 15px;
        min-width: 0;
        padding: 0 19px 0 21px;
        color: #70757a;
      }
      .place .body {
        display: grid;
        grid-template-columns: 1fr auto 24px;
        align-content: start;
        align-items: center;
        gap: 4px 19px;
        padding-top: 25px;
      }
      .travel .body {
        padding-top: 28px;
      }
      .end .body {
        gap: 16px;
        padding: 26px 25px 0 21px;
      }
      .dark {
        display: flex;
        color: #3c4043;
      }
      .mode {
        font-size: 22px;
        line-height: 28px;
        color: #5f6368;
      }
      .meta {
        margin-left: auto;
        font-size: 19px;
        line-height: 28px;
        white-space: nowrap;
      }
      .travel .chev {
        margin-left: 4px;
      }
      .chev {
        display: flex;
        color: #6c7075;
      }
      .name {
        margin: 0;
        font-size: 21px;
        font-weight: 500;
        line-height: 28px;
        color: #202124;
        white-space: nowrap;
      }
      .name em {
        margin-right: 4px;
      }
      .address {
        grid-column: 1 / -1;
        font-size: 22px;
        line-height: 28px;
      }
      .hidden {
        position: relative;
        height: 62px;
        overflow: hidden;
        background: linear-gradient(90deg, #dde6f2, #fafafa 12px, #fdfdfd);
      }
      .smudge {
        position: absolute;
        border-radius: 8px;
        background: #d2d5d5;
        filter: blur(9px);
      }
      .smudge.a {
        left: 16px;
        top: 5px;
        width: 74px;
        height: 18px;
        background: #bfc1c1;
      }
      .smudge.b {
        left: 14px;
        top: 34px;
        width: 294px;
        height: 22px;
      }
      .smudge.c {
        left: 300px;
        top: 6px;
        width: 180px;
        height: 14px;
        background: #ececed;
      }
      .place .body.masked {
        grid-template-columns: 1fr 24px;
        align-items: start;
        column-gap: 4px;
        padding: 24px 19px 0 8px;
      }
      .masked .chev {
        padding-top: 3px;
      }
      .actions {
        position: relative;
        display: grid;
        grid-template-columns: repeat(3, 1fr);
        height: 90px;
        background: #f4f4f4;
        box-shadow: 0 2px 4px rgba(0, 0, 0, 0.4);
        clip-path: inset(0 0 -8px 0);
      }
      .action {
        display: flex;
        align-items: center;
        gap: 15px;
        padding-left: 73px;
        font-size: 21px;
        line-height: 28px;
        font-weight: 500;
        color: #5f6368;
      }
      .action.more {
        gap: 19px;
        padding-left: 66px;
      }
      .sort {
        display: grid;
        place-items: center;
        align-self: center;
        padding: 24px 0 0 10px;
        color: #3c4043;
      }
      .home {
        position: absolute;
        left: 50%;
        bottom: 13px;
        width: 228px;
        height: 8px;
        margin-left: -114px;
        border-radius: 4px;
        background: #000;
      }
      .veil {
        position: absolute;
        inset: 0;
        display: flex;
        align-items: center;
        justify-content: center;
        padding-top: 21px;
        background: rgba(0, 0, 0, 0.5);
      }
      .home.over {
        background: #222;
      }
    `,
  ];

  private actions() {
    return html`
      <div class="actions">
        <button class="action">${checkCircle}是</button>
        <button class="action">${crossCircle}否</button>
        <button class="action more">${chevron(24)}其他</button>
      </div>
    `;
  }

  render() {
    return html`
      <div class="status">
        <span class="clock">${this.time}</span>
        <svg width="18" height="18" viewBox="0 0 17 17" aria-hidden="true"><path fill="currentColor" d="M16.500.5L.5 8l7 1.500 1.500 7z" stroke="currentColor" stroke-linejoin="round" /></svg>
        <div class="radios">
          <svg width="28" height="18" viewBox="0 0 28 18" aria-hidden="true">
            <rect x="0" y="11" width="5.500" height="7" rx="1.500" />
            <rect x="7.500" y="8" width="5.500" height="10" rx="1.500" />
            <rect x="15" y="4" width="5.500" height="14" rx="1.500" />
            <rect x="22.500" y="0" width="5.500" height="18" rx="1.500" fill=${this.fullSignal ? "#000" : "#cfcfcf"} />
          </svg>
          <svg width="24" height="18" viewBox="0 0 24 18" fill="none" stroke="#000" aria-hidden="true">
            <path d="M1.200 6.400a15.500 15.500 0 0 1 21.600 0" stroke-width="3.600" />
            <path d="M5.300 10.600a9.600 9.600 0 0 1 13.400 0" stroke-width="3.200" />
            <path d="M12 17.800L8.400 14.200a5.200 5.200 0 0 1 7.200 0z" fill="#000" stroke="none" />
          </svg>
          <svg width="40" height="20" viewBox="0 0 40 20" aria-hidden="true">
            <rect x="1" y="1" width="35" height="18" rx="5" fill="none" stroke="#8c8c8c" stroke-width="1.500" />
            <rect x="3" y="3" width="24" height="14" rx="3" />
            <path d="M38 6.500q2 1 2 3.500t-2 3.500z" fill="#8c8c8c" />
          </svg>
        </div>
      </div>

      <div class="header">
        <button class="back" aria-label="返回">
          <svg width="20" height="32" viewBox="0 0 20 32" fill="none" stroke="currentColor" stroke-width="3.500"><path d="M17 2L2.500 16.500 17 31" /></svg>
        </button>
        <h1 class="heading">2021年5月21日</h1>
        <div class="tools">
          <button aria-label="選擇日期">
            <svg width="28" height="32" viewBox="0 0 29 32">
              <path
                fill="currentColor"
                fill-rule="evenodd"
                d="M5 0h3v3h13V0h3v3h2a3 3 0 0 1 3 3v22a3 3 0 0 1-3 3H3a3 3 0 0 1-3-3V6a3 3 0 0 1 3-3h2zM3 11v16.500q0 .5.5.5h22q.5 0 .5-.5V11zM14.500 17.500h8v8h-8z"
              />
            </svg>
          </button>
          <button aria-label="更多選項">
            <svg width="26" height="8" viewBox="0 0 26 8" fill="currentColor"><circle cx="3.500" cy="4" r="3.300" /><circle cx="13" cy="4" r="3.300" /><circle cx="22.500" cy="4" r="3.300" /></svg>
          </button>
        </div>
      </div>

      <nav class="tabs">
        ${["天", "地點", "城市", "全球"].map((t, i) => html`<button class=${classMap({ tab: true, active: i === 0 })}>${t}</button>`)}
      </nav>

      <div class="map">
        <city-map .panX=${this.panX} .panY=${this.panY}></city-map>
        <button class="locate" aria-label="顯示地點">
          <svg width="23" height="32" viewBox="0 0 23 32">
            <path fill="currentColor" fill-rule="evenodd" d="M11.500 1C5.500 1 .7 5.500.7 11.500c0 7.500 10.800 19.500 10.800 19.500s10.800-12 10.800-19.500C22.300 5.500 17.500 1 11.500 1zm0 6.800a3.900 3.900 0 1 1 0 7.800 3.900 3.900 0 0 1 0-7.800z" />
          </svg>
        </button>
      </div>

      <div class="summary">
        ${motorcycle}
        <div>
          <div class="total">${this.distance}</div>
          <div class="sub">${this.duration}</div>
        </div>
      </div>

      <div class="row place first">
        <div><span class="badge brown">${stop}</span></div>
        <div class="rail start"><i class="dot"></i></div>
        ${this.stopTime
          ? html`<div class="body"><span></span><span class="meta">${this.stopTime}</span><span class="chev">${chevron(24)}</span></div>`
          : html`<div class="body masked">
              <div class="hidden"><i class="smudge a"></i><i class="smudge b"></i><i class="smudge c"></i></div>
              <span class="chev">${chevron(24)}</span>
            </div>`}
      </div>
      ${this.actions()}

      <div class="row travel">
        <span></span>
        <div class="rail"></div>
        <div class="body">
          <span class="dark">${this.mode === "car" ? car : motorcycle}</span>
          <span class="mode">${this.mode === "car" ? "開車" : "騎機車"}</span>
          <span class="meta">4.8 公里 · 24 分鐘</span>
          <span class="chev">${chevron(24)}</span>
        </div>
      </div>

      <div class="row place">
        <div><span class="badge">${bag}</span></div>
        <div class="rail joint"><div class="leg"><i class="dot"></i></div></div>
        <div class="body">
          <h2 class="name">大樂<em>DOLLARS</em>?</h2>
          <span class="meta">下午2:41 - 3:31</span>
          <span class="chev">${chevron(24)}</span>
          <div class="address">807高雄市三民區民族一路463號</div>
        </div>
      </div>
      ${this.actions()}

      <div class="row end">
        <button class="sort" aria-label="展開">
          <svg width="16" height="28" viewBox="0 0 16 28" fill="none" stroke="currentColor" stroke-width="3"><path d="M2 8l6-6 6 6M2 20l6 6 6-6" /></svg>
        </button>
        <div class="rail light finish"></div>
        <div class="body">
          <span class="dark">${motorcycle}</span>
          <span class="dark">${chevron(20)}</span>
          <span class="dark">
            <svg width="28" height="16" viewBox="-4 0 28 16" fill="none" stroke="currentColor" stroke-width="2.500">
              <path d="M.5 13L5 8.500Q7.500 6 10 8.500T15 9L21 4" />
              <path d="M16 2h6.500v6.500z" fill="currentColor" stroke="none" />
            </svg>
          </span>
          <span class="meta">7 公里 · 19 小時 43 分鐘</span>
        </div>
      </div>

      ${this.dimmed ? html`<div class="veil"><date-dialog></date-dialog></div>` : nothing}
      <div class=${classMap({ home: true, over: this.dimmed })}></div>
    `;
  }
}

/* ---------- page ---------- */

@customElement("app-root")
class AppRoot extends LitElement {
  static styles = css`
    :host {
      display: grid;
      grid-template-columns: 1fr 1fr;
      gap: 3px;
      padding: 3px 0;
      background: #fff;
      font-family: Inter, "Noto Sans CJK TC", sans-serif;
      text-autospace: normal;
    }
  `;

  render() {
    return html`
      <timeline-phone time="1:46" distance="12 公里" duration="1 小時 9 分鐘"></timeline-phone>
      <timeline-phone
        time="1:48"
        distance="7 公里"
        duration="45 分鐘"
        mode="car"
        stopTime="2:17"
        .panX=${144}
        .panY=${81}
        .fullSignal=${true}
        .dimmed=${true}
      ></timeline-phone>
    `;
  }
}
